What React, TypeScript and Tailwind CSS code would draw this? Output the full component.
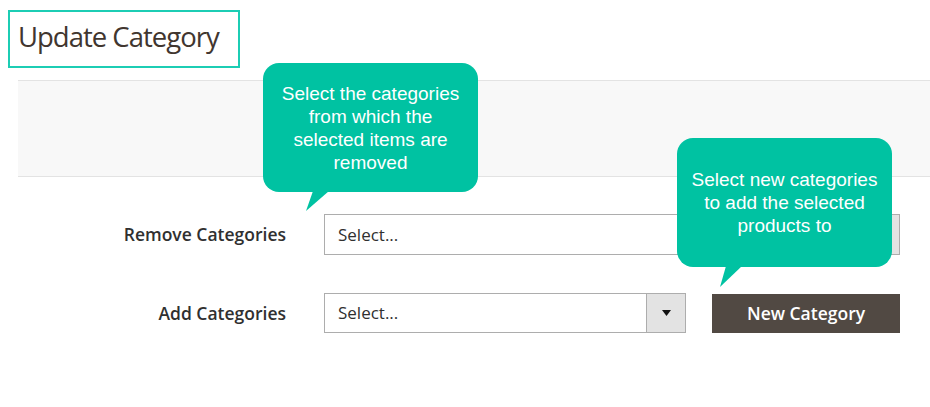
import React from "react";

const bubbleFont = { fontFamily: '"Liberation Sans", Arial, sans-serif' };

function Bubble({ text, className, tail }: { text: string[]; className: string; tail: string }) {
    return (
        <div className={"absolute w-[215px] h-[129px] " + className}>
            <div
                className="w-full h-full rounded-[16px] bg-[#00c2a2] text-white text-[19px] leading-[23px] text-center flex flex-col items-center justify-center"
                style={bubbleFont}
            >
                {text.map((t) => (
                    <div key={t} className="whitespace-nowrap">{t}</div>
                ))}
            </div>
            <svg className="absolute left-0 top-[128px]" width="80" height="24">
                <polygon points={tail} fill="#00c2a2" />
            </svg>
        </div>
    );
}

export default function App() {
    return (
        <div className="relative w-[930px] h-[407px] bg-white overflow-hidden font-['Open_Sans',sans-serif]">
            <div className="ml-[8px] mt-[10px] w-[232px] h-[58px] border-2 border-[#1ccdb4] pl-[8px] pb-[4px] flex items-center">
                <h1 className="text-[27.5px] text-[#41362f] leading-none whitespace-nowrap tracking-[-1px]">Update Category</h1>
            </div>

            <div className="ml-[18px] mt-[12px] h-[97px] bg-[#f8f8f8] border-y border-[#e3e3e3]"></div>

            <div className="mt-[37px] flex items-center h-[41px]">
                <label className="w-[286px] text-right text-[17.5px] font-semibold text-[#303030]">Remove Categories</label>
                <div className="ml-[38px] w-[576px] h-[41px] border border-[#adadad] flex items-center">
                    <span className="pl-[13px] text-[17px] text-[#303030] flex-1">Select...</span>
                    <span className="w-[39px] h-full bg-[#e3e3e3] border-l border-[#adadad] flex items-center justify-center">
                        <svg width="9" height="6"><polygon points="0,0 9,0 4.5,6" fill="#111" /></svg>
                    </span>
                </div>
            </div>

            <div className="mt-[38px] flex items-center h-[40px]">
                <label className="w-[286px] text-right text-[17.5px] font-semibold text-[#303030]">Add Categories</label>
                <div className="ml-[38px] w-[362px] h-[40px] border border-[#adadad] flex items-center">
                    <span className="pl-[13px] text-[17px] text-[#303030] flex-1">Select...</span>
                    <span className="w-[39px] h-full bg-[#e3e3e3] border-l border-[#adadad] flex items-center justify-center">
                        <svg width="9" height="6"><polygon points="0,0 9,0 4.5,6" fill="#111" /></svg>
                    </span>
                </div>
                <button className="ml-[26px] w-[188px] h-[39px] bg-[#514943] text-white text-[17.5px] font-semibold">
                    New Category
                </button>
            </div>

            <Bubble
                className="left-[263px] top-[63px]"
                text={["Select the categories", "from which the", "selected items are", "removed"]}
                tail="50,0 66,0 43,20"
            />
            <Bubble
                className="left-[677px] top-[138px]"
                text={["Select new categories", "to add the selected", "products to"]}
                tail="49,0 65,0 43,21"
            />
        </div>
    );
}
